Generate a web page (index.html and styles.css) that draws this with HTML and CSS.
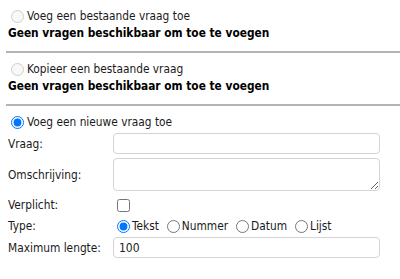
FILE: index.html
```html
<!DOCTYPE html>
<html lang="nl">
<head>
  <meta charset="UTF-8">
  <title>Vraag toevoegen</title>
  <link rel="stylesheet" href="styles.css">
</head>
<body>
  <div class="section">
    <label class="choice"><input type="radio" name="mode" disabled>Voeg een bestaande vraag toe</label>
    <p class="empty">Geen vragen beschikbaar om toe te voegen</p>
  </div>
  <div class="section">
    <label class="choice"><input type="radio" name="mode" disabled>Kopieer een bestaande vraag</label>
    <p class="empty">Geen vragen beschikbaar om toe te voegen</p>
  </div>
  <div class="section last">
    <label class="choice"><input type="radio" name="mode" checked>Voeg een nieuwe vraag toe</label>
    <div class="form">
      <label class="lbl">Vraag:</label>
      <input class="field" type="text">
      <label class="lbl">Omschrijving:</label>
      <textarea class="field area"></textarea>
      <label class="lbl">Verplicht:</label>
      <div><input class="check" type="checkbox"></div>
      <label class="lbl">Type:</label>
      <div class="types">
        <label><input type="radio" name="type" checked>Tekst</label>
        <label><input type="radio" name="type">Nummer</label>
        <label><input type="radio" name="type">Datum</label>
        <label><input type="radio" name="type">Lijst</label>
      </div>
      <label class="lbl">Maximum lengte:</label>
      <input class="field" type="text" value="100">
    </div>
  </div>
</body>
</html>
```
FILE: styles.css
```css
body {
  margin: 0;
  padding: 0;
  font-family: "DejaVu Sans Condensed", "DejaVu Sans", sans-serif;
  font-size: 11.8px;
  color: #1a1a1a;
  background: #fff;
}

.section {
  margin-left: 6px;
  padding: 6px 0 11px 2px;
  border-bottom: 2px solid #b4b4b4;
}

.section.last {
  border-bottom: none;
  padding-bottom: 0;
}

.choice {
  display: flex;
  align-items: center;
  height: 20px;
}

.choice input {
  margin: 0 3px 0 3px;
  width: 13px;
  height: 13px;
}

.empty {
  margin: 0;
  line-height: 14px;
  font-weight: bold;
  color: #000;
}

.form {
  display: grid;
  grid-template-columns: 105px 267px;
  grid-template-rows: 21px 33px 20px 14px 21px;
  row-gap: 4px;
  align-items: center;
  margin-top: 1px;
}

.field {
  box-sizing: border-box;
  height: 21px;
  border: 1px solid #d4d4d4;
  border-radius: 4px;
  font-family: inherit;
  font-size: 12px;
  padding: 2px 5px;
  color: #222;
}

.area {
  height: 33px;
  resize: vertical;
}

.check {
  display: block;
  margin: 0 0 0 4px;
  width: 13px;
  height: 13px;
}

.types {
  display: flex;
  gap: 8px;
}

.types label {
  display: flex;
  align-items: center;
}

.types input {
  margin: 0 2px 0 4px;
  width: 13px;
  height: 13px;
}

.types label + label input {
  margin-left: 0;
}
```
